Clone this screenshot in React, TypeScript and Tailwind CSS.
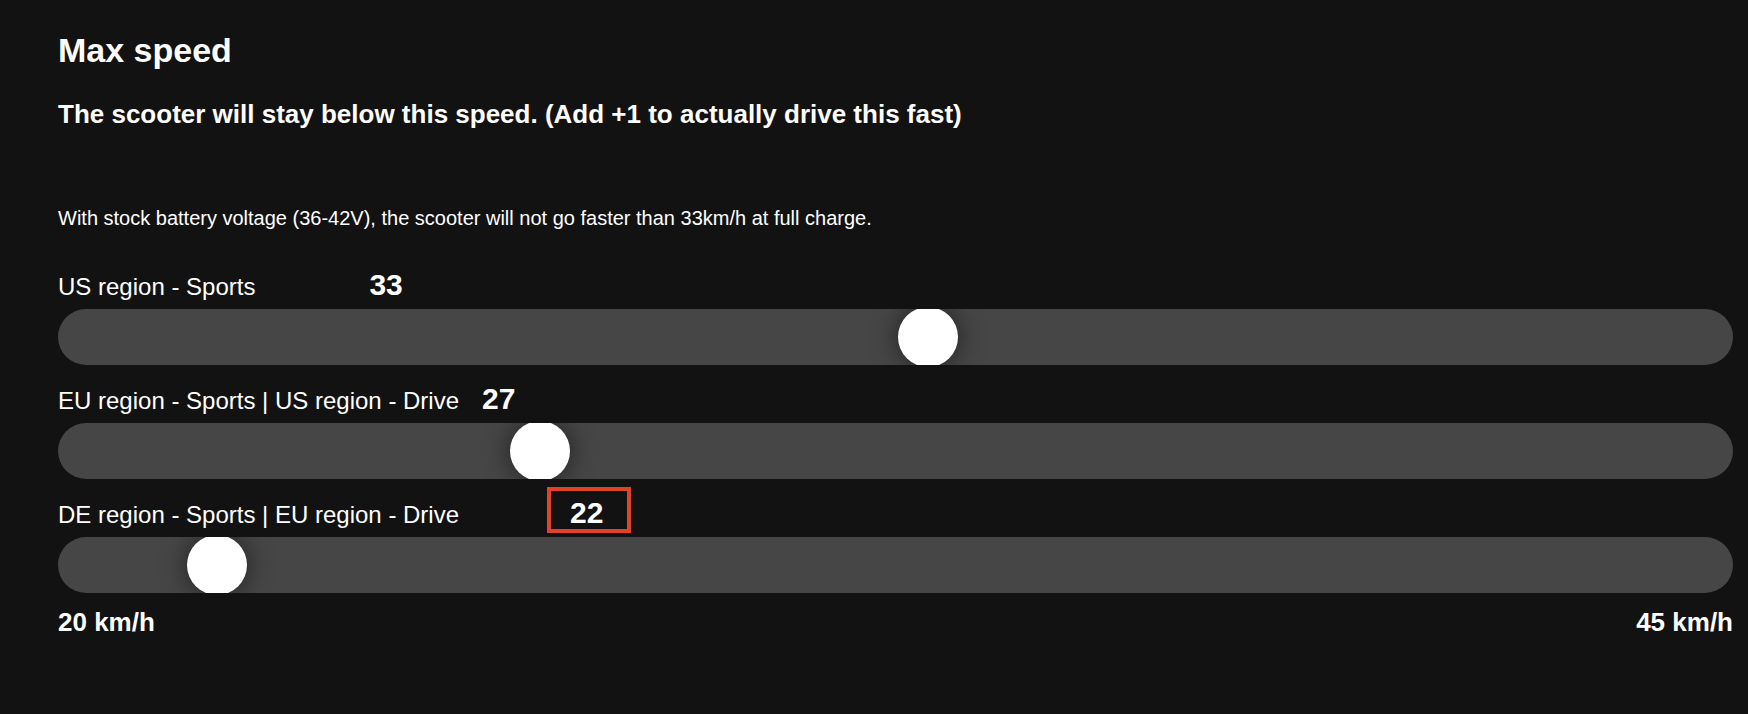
import React from 'react';

// One slider row: label, current value and a (read-only) track with its thumb
interface SpeedRow {
  label: string;
  value: number;
  valueGap: string;
  highlighted?: boolean;
}

const MIN = 20;
const MAX = 45;

const rows: SpeedRow[] = [
  { label: 'US region - Sports', value: 33, valueGap: 'ml-[114px]' },
  { label: 'EU region - Sports | US region - Drive', value: 27, valueGap: 'ml-[23px]' },
  { label: 'DE region - Sports | EU region - Drive', value: 22, valueGap: 'ml-[111px]', highlighted: true },
];

const SpeedSlider = ({ row }: { row: SpeedRow }) => {
  // thumb is 60px wide, so its left edge runs from 0 to (100% - 60px)
  const ratio = (row.value - MIN) / (MAX - MIN);
  return (
    <div className="mt-[19px] first:mt-0">
      <div className="flex items-baseline h-[32px]">
        <span className="text-[24px] leading-[30px]">{row.label}</span>
        <span className={`relative font-bold text-[30px] leading-[30px] ${row.valueGap}`}>
          {row.value}
          {row.highlighted && (
            <span className="absolute -top-[11px] -bottom-[5px] -left-[23px] -right-[28px] border-4 border-[#e0432a]" />
          )}
        </span>
      </div>
      <div className="relative mt-[7px] h-[56px] rounded-full bg-[#464646] overflow-hidden">
        <div
          className="absolute top-1/2 -translate-y-1/2 w-[60px] h-[60px] rounded-full bg-white shadow-[0_0_26px_rgba(0,0,0,0.55)]"
          style={{ left: `calc((100% - 60px) * ${ratio})` }}
        />
      </div>
    </div>
  );
};

export default function App() {
  return (
    <div
      className="min-h-screen w-full bg-[#121212] text-white pl-[58px] pr-[15px] pt-[33px]"
      style={{ fontFamily: '"Liberation Sans", Arial, sans-serif' }}
    >
      <h2 className="text-[34px] leading-[34px] font-bold">Max speed</h2>
      <h3 className="mt-[34px] text-[26px] leading-[26px] font-bold">
        The scooter will stay below this speed. (Add +1 to actually drive this fast)
      </h3>
      <p className="mt-[81px] text-[20px] leading-[20px]">
        With stock battery voltage (36-42V), the scooter will not go faster than 33km/h at full charge.
      </p>

      <div className="mt-[42px]">
        {rows.map((row) => (
          <SpeedSlider key={row.label} row={row} />
        ))}
      </div>

      <div className="mt-[16px] flex justify-between text-[26px] leading-[26px] font-bold">
        <span>{MIN} km/h</span>
        <span>{MAX} km/h</span>
      </div>
    </div>
  );
}
